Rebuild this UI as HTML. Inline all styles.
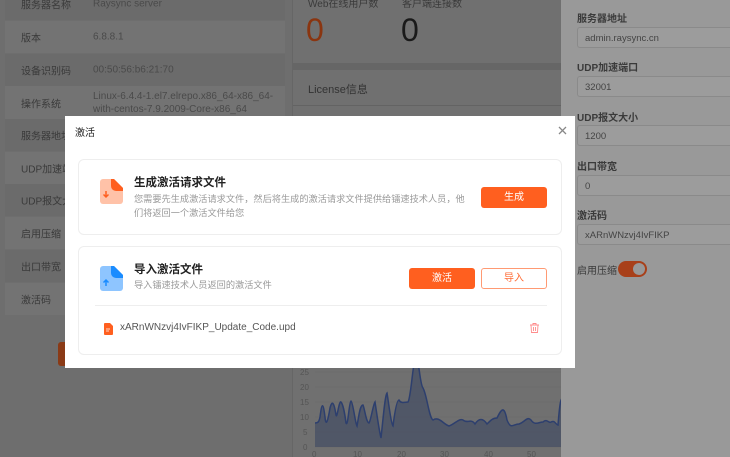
<!DOCTYPE html>
<html><head><meta charset="utf-8"><style>
*{box-sizing:border-box;margin:0;padding:0}
body{width:730px;height:457px;overflow:hidden;position:relative;font-family:"Liberation Sans","Noto Sans CJK SC",sans-serif;background:#6e6e6e;font-size:10px}
.abs{position:absolute}
.row{position:absolute;left:5px;width:280px;height:32px;color:#3a3a3a;font-size:10px}
.row .k{position:absolute;left:16px;top:50%;transform:translateY(-50%)}
.row .v{position:absolute;left:88px;top:50%;transform:translateY(-50%);color:#4a4a4a;line-height:13px}
.dr{background:#999;left:561px;top:0;width:169px;height:457px}
.lb{position:absolute;left:577px;font-size:10px;font-weight:bold;color:#3a3a3a}
.in{position:absolute;left:577px;width:160px;height:21px;border:1px solid #8a8a8a;border-radius:3px;background:#9c9c9c;color:#444;font-size:9.5px;padding:5px 7px}
.modal{left:65px;top:116px;width:510px;height:252px;background:#fff}
.card{position:absolute;left:13px;width:484px;border:1px solid #eee;border-radius:6px;background:#fff}
.btn{position:absolute;height:21px;border-radius:3px;font-size:10px;text-align:center;line-height:21px}
.o{background:#ff5f1f;color:#fff}
.w{background:#fff;border:1px solid #ff9a73;color:#ff6a33;line-height:19px}
h4{font-size:11.5px;font-weight:bold;color:#222;position:absolute;line-height:14px}
.d{position:absolute;color:#999;font-size:9.2px;line-height:14px}
</style></head><body>
<div class="row" style="top:-12px;background:#6b6b6b"><span class="k">服务器名称</span><span class="v">Raysync server</span></div>
<div class="row" style="top:21px;background:#737373"><span class="k">版本</span><span class="v">6.8.8.1</span></div>
<div class="row" style="top:54px;background:#6b6b6b"><span class="k">设备识别码</span><span class="v">00:50:56:b6:21:70</span></div>
<div class="row" style="top:86px;height:33px;background:#737373"><span class="k">操作系统</span><span class="v">Linux-6.4.4-1.el7.elrepo.x86_64-x86_64-<br>with-centos-7.9.2009-Core-x86_64</span></div>
<div class="row" style="top:119px;background:#6b6b6b"><span class="k">服务器地址</span></div>
<div class="row" style="top:152px;background:#737373"><span class="k">UDP加速端口</span></div>
<div class="row" style="top:184px;background:#6b6b6b"><span class="k">UDP报文大小</span></div>
<div class="row" style="top:217px;background:#737373"><span class="k">启用压缩</span></div>
<div class="row" style="top:250px;background:#6b6b6b"><span class="k">出口带宽</span></div>
<div class="row" style="top:283px;background:#737373"><span class="k">激活码</span></div>
<div class="abs" style="left:58px;top:342px;width:10px;height:24px;background:#8a3a16;border-radius:3px"></div>
<div class="abs" style="left:292px;top:0;width:269px;height:457px;background:#666"></div>
<div class="abs" style="left:293px;top:0;width:268px;height:63px;background:#707070"></div>
<div class="abs" style="left:308px;top:-5px;color:#3a3a3a;font-size:10px">Web在线用户数</div>
<div class="abs" style="left:402px;top:-5px;color:#3a3a3a;font-size:10px">客户端连接数</div>
<div class="abs" style="left:306px;top:12px;color:#8a3510;font-size:32px">0</div>
<div class="abs" style="left:401px;top:12px;color:#1a1a1a;font-size:32px">0</div>
<div class="abs" style="left:293px;top:70px;width:268px;height:387px;background:#707070"></div>
<div class="abs" style="left:293px;top:105px;width:268px;height:1px;background:#636363"></div>
<div class="abs" style="left:308px;top:81px;color:#333;font-size:11px">License信息</div>
<svg class="abs" style="left:293px;top:360px" width="268" height="97">
<g stroke="#666" stroke-width=".5"><path d="M22 87H268M22 72H268M22 57H268M22 42H268M22 27H268M22 12H268"/></g>
<path d="M22 63 C25 63,26 62,27 57 C29 42,30 42,32 57 C33 68,35 60,37 48 C39 40,41 42,43 55 C44 60,46 40,48 42 C50 44,52 55,53 63 C55 68,56 42,58 41 C60 42,62 62,64 66 C66 55,67 45,70 45 C72 50,73 62,76 63 C78 60,80 45,82 42 C84 55,86 70,88 78 C90 60,92 35,94 33 C96 45,98 64,100 66 C102 50,104 40,106 40 C108 44,112 42,115 42 C118 38,120 0,123 -5 C126 0,127 25,130 28 C134 35,136 58,140 60 C146 56,150 64,156 66 C162 64,166 58,170 60 C174 64,178 58,182 64 C186 58,190 58,194 64 C198 60,200 58,204 58 C208 50,211 44,214 60 C218 70,220 64,226 64 C232 62,234 56,238 60 C242 66,246 62,250 62 C254 58,256 64,258 62 C262 60,262 64,265 65 C267 40,268 38,270 38 L270 87 L22 87Z" fill="#4d5466" opacity=".9"/>
<path d="M22 63 C25 63,26 62,27 57 C29 42,30 42,32 57 C33 68,35 60,37 48 C39 40,41 42,43 55 C44 60,46 40,48 42 C50 44,52 55,53 63 C55 68,56 42,58 41 C60 42,62 62,64 66 C66 55,67 45,70 45 C72 50,73 62,76 63 C78 60,80 45,82 42 C84 55,86 70,88 78 C90 60,92 35,94 33 C96 45,98 64,100 66 C102 50,104 40,106 40 C108 44,112 42,115 42 C118 38,120 0,123 -5 C126 0,127 25,130 28 C134 35,136 58,140 60 C146 56,150 64,156 66 C162 64,166 58,170 60 C174 64,178 58,182 64 C186 58,190 58,194 64 C198 60,200 58,204 58 C208 50,211 44,214 60 C218 70,220 64,226 64 C232 62,234 56,238 60 C242 66,246 62,250 62 C254 58,256 64,258 62 C262 60,262 64,265 65 C267 40,268 38,270 38" fill="none" stroke="#2d3f6e" stroke-width="1.5"/>
<g fill="#555" font-size="8"><text x="7" y="15">25</text><text x="7" y="30">20</text><text x="7" y="45">15</text><text x="7" y="60">10</text><text x="10" y="75">5</text><text x="10" y="90">0</text><text x="19" y="97">0</text><text x="60" y="97">10</text><text x="104" y="97">20</text><text x="147" y="97">30</text><text x="191" y="97">40</text><text x="234" y="97">50</text></g></svg>
<div class="abs dr"></div>
<div class="lb" style="top:10px">服务器地址</div><div class="in" style="top:27px">admin.raysync.cn</div>
<div class="lb" style="top:59px">UDP加速端口</div><div class="in" style="top:76px">32001</div>
<div class="lb" style="top:109px">UDP报文大小</div><div class="in" style="top:125px">1200</div>
<div class="lb" style="top:158px">出口带宽</div><div class="in" style="top:175px">0</div>
<div class="lb" style="top:207px">激活码</div><div class="in" style="top:224px">xARnWNzvj4IvFIKP</div>
<div class="abs" style="left:577px;top:262px;color:#3a3a3a;font-size:10px">启用压缩</div>
<div class="abs" style="left:618px;top:261px;width:29px;height:16px;border-radius:8px;background:#a8401a"><div style="position:absolute;right:2px;top:2px;width:12px;height:12px;border-radius:50%;background:#999"></div></div>

<div class="abs modal">
<div class="abs" style="left:10px;top:8px;font-size:10px;color:#222">激活</div>
<svg class="abs" style="left:493px;top:10px" width="9" height="9"><path d="M1 1l7 7M8 1l-7 7" stroke="#888" stroke-width="1.3"/></svg>
<div class="card" style="top:43px;height:76px">
<svg class="abs" style="left:19px;top:19px" width="25" height="25"><path d="M2 3a3 3 0 0 1 3-3h11l9 9v13a3 3 0 0 1-3 3H5a3 3 0 0 1-3-3z" fill="#ffc2a8"/><path d="M13 0h3l9 9v3h-7a5 5 0 0 1-5-5z" fill="#ff5f1f"/><path d="M8 12v6M5.5 15.5 8 18l2.5-2.5" stroke="#ff5f1f" stroke-width="1.5" fill="none"/></svg>
<h4 style="left:55px;top:16px">生成激活请求文件</h4>
<div class="d" style="left:55px;top:32px;width:335px">您需要先生成激活请求文件，然后将生成的激活请求文件提供给镭速技术人员，他们将返回一个激活文件给您</div>
<div class="btn o" style="left:402px;top:27px;width:66px">生成</div>
</div>
<div class="card" style="top:130px;height:109px">
<svg class="abs" style="left:19px;top:19px" width="25" height="25"><path d="M2 3a3 3 0 0 1 3-3h11l9 9v13a3 3 0 0 1-3 3H5a3 3 0 0 1-3-3z" fill="#8ec5ff"/><path d="M13 0h3l9 9v3h-7a5 5 0 0 1-5-5z" fill="#1a8cff"/><path d="M8 20v-6M5.5 16.5 8 14l2.5 2.5" stroke="#1a8cff" stroke-width="1.5" fill="none"/></svg>
<h4 style="left:55px;top:16px">导入激活文件</h4>
<div class="d" style="left:55px;top:31px">导入镭速技术人员返回的激活文件</div>
<div class="btn o" style="left:330px;top:21px;width:66px">激活</div>
<div class="btn w" style="left:402px;top:21px;width:66px">导入</div>
<div class="abs" style="left:16px;top:58px;width:452px;height:1px;background:#eee"></div>
<svg class="abs" style="left:25px;top:76px" width="9" height="12"><path d="M0 1a1 1 0 0 1 1-1h5l3 3v8a1 1 0 0 1-1 1H1a1 1 0 0 1-1-1z" fill="#ff5f1f"/><path d="M2 6h4M2 8h3" stroke="#fff" stroke-width=".8"/></svg>
<div class="abs" style="left:41px;top:75px;color:#555;font-size:10px">xARnWNzvj4IvFIKP_Update_Code.upd</div>
<svg class="abs" style="left:451px;top:76px" width="9" height="10"><path d="M0 2h9M3 2V.5h3V2M1 2l.5 7.5h6L8 2M3.5 4v4M5.5 4v4" stroke="#ff8c8c" fill="none" stroke-width=".9"/></svg>
</div>
</div>
</body></html>
